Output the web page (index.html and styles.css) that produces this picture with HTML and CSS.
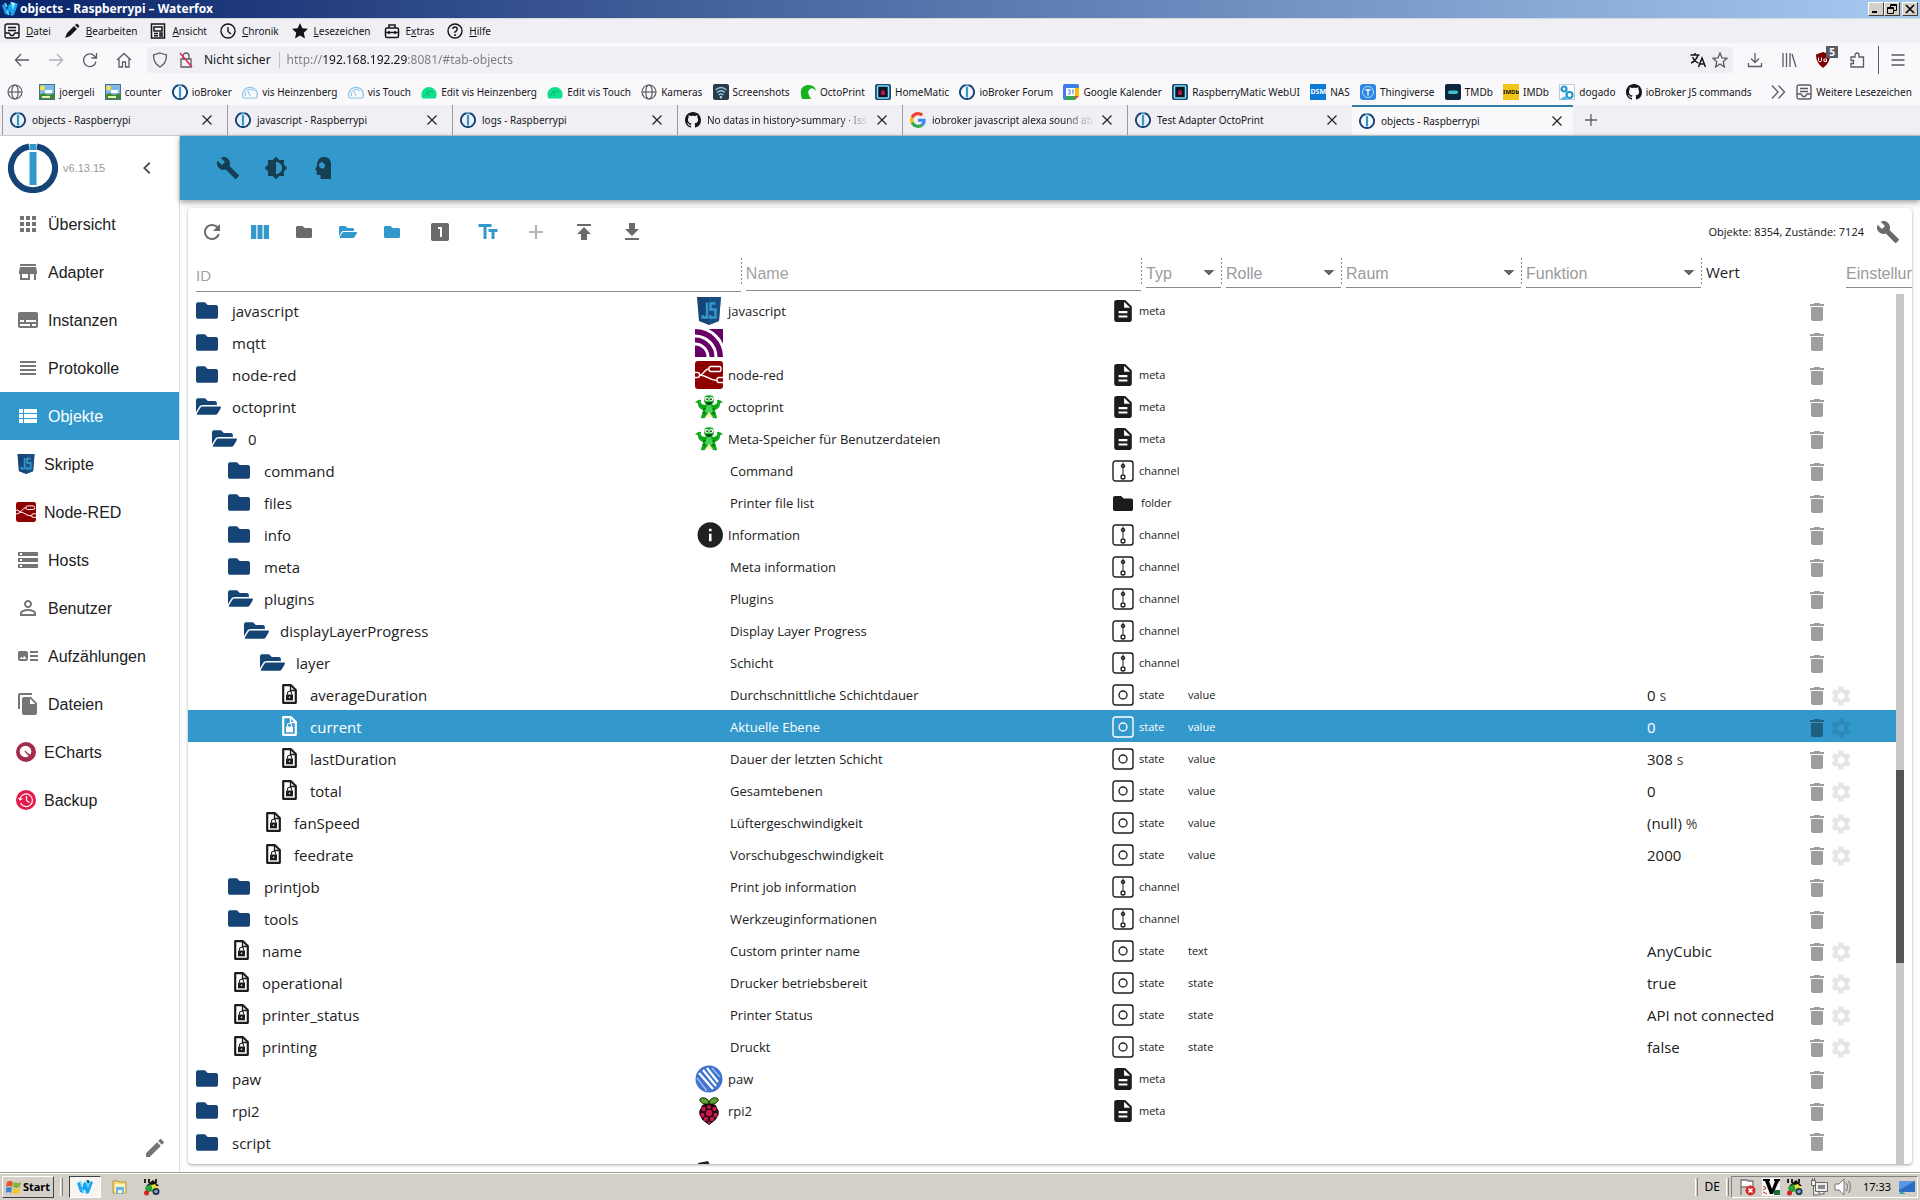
FILE: index.html
```html
<!DOCTYPE html>
<html lang="de">
<head>
<meta charset="utf-8">
<title>objects - Raspberrypi</title>
<link rel="stylesheet" href="styles.css">
</head>
<body>
<svg class="sprite" aria-hidden="true">
  <symbol id="folder" viewBox="0 64 512 384"><path d="M464 128H272l-64-64H48C21.49 64 0 85.49 0 112v288c0 26.51 21.49 48 48 48h416c26.51 0 48-21.49 48-48V176c0-26.51-21.49-48-48-48z"/></symbol>
  <symbol id="open" viewBox="0 64 576 384"><path d="M572.694 292.093L500.27 416.248A63.997 63.997 0 0 1 444.989 448H45.025c-18.523 0-30.064-20.093-20.731-36.093l72.424-124.155A64 64 0 0 1 152 256h399.964c18.523 0 30.064 20.093 20.73 36.093zM152 224h328v-48c0-26.51-21.49-48-48-48H272l-64-64H48C21.49 64 0 85.49 0 112v278.046l69.077-118.418C86.214 242.25 117.989 224 152 224z"/></symbol>
  <symbol id="state" viewBox="0 0 15 20"><path d="M1.2 1.2H9l4.8 4.8v12.8H1.2z" fill="none" stroke="currentColor" stroke-width="2.2" stroke-linejoin="round"/><path d="M8.5 1v5.500H14" fill="none" stroke="currentColor" stroke-width="1.400"/><path d="M4 10.500h7v5.800H4z"/><path d="M5.500 10.500V9.200a2 2 0 0 1 4 0v1.300" fill="none" stroke="currentColor" stroke-width="1.100"/><circle cx="7.500" cy="13.200" r=".8" fill="#fff"/></symbol>
  <symbol id="doc" viewBox="4 2 16 20"><path d="M14 2H6c-1.100 0-2 .9-2 2v16c0 1.100.9 2 2 2h12c1.100 0 2-.9 2-2V8l-6-6zm2 16H8v-2h8v2zm0-4H8v-2h8v2zm-3-5V3.500L18.500 9H13z"/></symbol>
  <symbol id="channel" viewBox="0 0 22 22"><g fill="none" stroke="currentColor"><rect x="1" y="1" width="20" height="20" rx="2.500" stroke-width="1.400"/><path d="M11 2.500v12"/><circle cx="11" cy="6" r="1.800" fill="currentColor" fill-opacity=".55"/><circle cx="11" cy="17" r="2" stroke-width="1.300"/></g></symbol>
  <symbol id="st" viewBox="0 0 22 22"><g fill="none" stroke="currentColor"><rect x="1" y="1" width="20" height="20" rx="2.500" stroke-width="1.400"/><circle cx="11" cy="11" r="4" stroke-width="1.300"/></g></symbol>
  <symbol id="trash" viewBox="0 0 24 24"><path d="M6 19c0 1.100.9 2 2 2h8c1.100 0 2-.9 2-2V7H6v12zM19 4h-3.500l-1-1h-5l-1 1H5v2h14V4z"/></symbol>
  <symbol id="gear" viewBox="0 0 24 24"><path d="M19.140 12.940c.04-.3.060-.61.060-.94 0-.32-.02-.64-.07-.94l2.030-1.580c.18-.14.23-.41.120-.61l-1.920-3.320c-.12-.22-.37-.29-.59-.22l-2.390.96c-.5-.38-1.030-.7-1.620-.94l-.36-2.540c-.04-.24-.24-.41-.48-.41h-3.840c-.24 0-.43.170-.47.410l-.36 2.540c-.59.240-1.130.570-1.620.940l-2.390-.96c-.22-.08-.47 0-.59.220L2.740 8.870c-.12.210-.08.470.120.610l2.030 1.580c-.05.3-.09.630-.09.940s.02.640.07.940l-2.030 1.580c-.18.140-.23.410-.12.610l1.920 3.320c.12.220.37.290.59.220l2.390-.96c.5.380 1.030.7 1.620.940l.36 2.540c.05.240.24.410.48.410h3.840c.24 0 .44-.17.470-.41l.36-2.540c.59-.24 1.130-.56 1.620-.94l2.390.96c.22.080.47 0 .59-.22l1.920-3.320c.12-.22.070-.47-.12-.61l-2.010-1.580zM12 15.600c-1.980 0-3.600-1.620-3.600-3.600s1.620-3.600 3.600-3.600 3.600 1.620 3.600 3.600-1.620 3.600-3.600 3.600z"/></symbol>
  <symbol id="wrench" viewBox="0 0 24 24"><path d="M22.700 19l-9.100-9.100c.9-2.300.4-5-1.500-6.900-2-2-5-2.400-7.400-1.300L9 6 6 9 1.600 4.700C.4 7.100.9 10.100 2.900 12.100c1.900 1.900 4.600 2.400 6.900 1.500l9.100 9.100c.4.4 1 .4 1.400 0l2.300-2.300c.5-.4.5-1.100.1-1.400z"/></symbol>
  <symbol id="iob" viewBox="0 0 50 50"><path d="M21 3.500a22 22 0 1 0 8 0" fill="none" stroke="#164477" stroke-width="6"/><path d="M21.500 1h7v6h-7zM21.500 9h7v33h-7z" fill="#3399cc"/></symbol>
  <symbol id="js" viewBox="0 0 24 28"><path d="M0 0h24l-2 24-10 4-10-4z" fill="#164477"/><path d="M12 0h12l-2 24-10 4z" fill="#1f5587" opacity=".6"/><path d="M5.500 18v2.500H10V5.500M18.500 6.500h-5v6h5v8h-5.500V18" fill="none" stroke="#3399cc" stroke-width="2.400"/></symbol>
  <symbol id="mqtt" viewBox="0 0 28 28"><path d="M0 0h28v28H0z" fill="#660066"/><g fill="none" stroke="#fff" stroke-width="3"><circle cx="0" cy="28" r="13"/><circle cx="0" cy="28" r="21"/><circle cx="0" cy="28" r="29.500"/></g></symbol>
  <symbol id="nred" viewBox="0 0 28 28"><rect width="28" height="28" rx="3" fill="#8f0000"/><g fill="none" stroke="#fff" stroke-width="1.400"><rect x="14" y="5.500" width="12" height="5" rx="2"/><path d="M0 11.500h2.500a2 2 0 0 1 2 2v1a2 2 0 0 1-2 2H0M28 16.500h-4a2 2 0 0 0-2 2v1a2 2 0 0 0 2 2h4M4.500 14c5 0 4-6 9.500-6M4.500 14c8 0 9 5.500 17.500 5.500"/></g></symbol>
  <symbol id="octo" viewBox="0 0 28 24"><path d="M10 1q4-1.500 8 0l1 4q0 3-2 4 1 2 4 0 2-1 1-4 3-1 6 3-3-1-3 1 0 4-5 6l1 4q1 3 1 4-3 1-5-1h-6q-2 2-5 1 0-1 1-4l1-4q-5-2-5-6 0-2-3-1 3-4 6-3-1 3 1 4 3 2 4 0-2-1-2-4z" fill="#0fa81b"/><path d="M11 2h6l-1 6h-4zM12 10h4l2 8h-8z" fill="#45d455"/><circle cx="11.500" cy="4" r="2" fill="#fff"/><circle cx="16.500" cy="4" r="2" fill="#fff"/><circle cx="12" cy="4.200" r=".9"/><circle cx="16" cy="4.200" r=".9"/><path d="M11 7.500h6L14 10zM8 15l2-2M20 15l-2-2M8 18h3M17 18h3" stroke="#044b08"/><path d="M14 17l4 5h-8z" fill="#f4efa8"/></symbol>
  <symbol id="paw" viewBox="0 0 28 28"><circle cx="14" cy="14" r="13.500" fill="#3f73cf"/><path d="M4 8l14 16M8 5l13 16M12 3l11 14" stroke="#fff" stroke-width="2.200"/><path d="M2 13l10 13M17 3l8 9" stroke="#9ab9ee" stroke-width="1.500"/></symbol>
  <symbol id="rpi" viewBox="0 0 22 28"><path d="M11 7Q5 8 2 4 1 0 7 1q4 1 4 6 0-5 4-6 6-1 5 3-3 4-9 3z" fill="#5ea52c" stroke="#1a2a0c"/><path d="M11 7q7-1 8 4 3 3 1 8-2 4-5 6l-4 3-4-3q-3-2-5-6-2-5 1-8 1-5 8-4z" fill="#200610"/><g fill="#c51a4a"><circle cx="11" cy="16" r="3.200"/><circle cx="5.500" cy="12" r="2.200"/><circle cx="16.500" cy="12" r="2.200"/><circle cx="11" cy="10" r="2"/><circle cx="4.500" cy="18" r="2.200"/><circle cx="17.500" cy="18" r="2.200"/><circle cx="8" cy="22" r="2.200"/><circle cx="14" cy="22" r="2.200"/><circle cx="11" cy="25.500" r="1.300"/></g></symbol>
  <symbol id="globe" viewBox="0 0 16 16"><g fill="none" stroke="#5b5b66" stroke-width="1.200"><circle cx="8" cy="8" r="7"/><ellipse cx="8" cy="8" rx="3.200" ry="7"/><path d="M1 8h14"/></g></symbol>
  <symbol id="pic" viewBox="0 0 16 16"><path d="M0 0h16v16H0z" fill="#7db7ec"/><circle cx="3.500" cy="4" r="2.500" fill="#f6e34a"/><path d="M6 6h7v3H6z" fill="#fff"/><path d="M0 11l4-2 5 2 7-2v7H0z" fill="#3d8b2c"/><path d="M3 12h8v2H3z" fill="#e9f3c2"/><path d="M.5.5h15v15H.5z" fill="none" stroke="#4b6f86"/></symbol>
  <symbol id="gauge" viewBox="0 0 16 16"><path d="M1.500 14A7.300 7.300 0 1 1 14.500 14z" fill="#f4fbff" stroke="#8fc2e6" stroke-width="1.200"/><path d="M3.500 12A5 5 0 0 1 12 7M8 12L6 7" fill="none" stroke="#8fc2e6"/></symbol>
  <symbol id="ggauge" viewBox="0 0 16 16"><path d="M1.500 14.500A7.600 7.600 0 1 1 14.500 14.500z" fill="#0fe08c"/><path d="M4 12A5 5 0 0 1 12 8M8 12L6 7" fill="none" stroke="#0bb573"/></symbol>
  <symbol id="wifi" viewBox="0 0 16 16"><rect width="16" height="16" rx="2" fill="#2b3a45"/><path d="M2.500 6q5.500-5 11 0M4 8.500q4-3.500 8 0M5.500 11q2.500-2 5 0" fill="none" stroke="#8fc7ee" stroke-width="1.300"/><circle cx="8" cy="13.200" r="1.200" fill="#b6dcf5"/></symbol>
  <symbol id="tent" viewBox="0 0 16 16"><path d="M2 15Q-2 3 7 1q8-1 9 6-3-4-6-2t-1 6l2 4z" fill="#16b31c"/></symbol>
  <symbol id="hm" viewBox="0 0 16 16"><rect width="16" height="16" rx="2" fill="#1c4a74"/><rect x="2.500" y="2" width="11" height="12" rx="1" fill="#0a1622" stroke="#7fe0fa" stroke-width="1.500"/><path d="M6 11V7.500L8 5.500l2 2V11z" fill="#b8173d"/></symbol>
  <symbol id="cal" viewBox="0 0 16 16"><path d="M0 2q0-2 2-2h12q2 0 2 2v3H0z" fill="#3f7de8"/><path d="M0 4h4v12H2q-2 0-2-2z" fill="#3f7de8"/><path d="M12 4h4v8h-4z" fill="#fbbc04"/><path d="M3 12h9v4H3z" fill="#34a853"/><path d="M12 12h4l-4 4z" fill="#ea4335"/><path d="M3 4h9v8H3z" fill="#fff"/><path d="M5 6h2v4H5M9 6h1v4" fill="none" stroke="#3f7de8"/></symbol>
  <symbol id="github" viewBox="0 0 16 16"><path d="M8 0C3.580 0 0 3.580 0 8c0 3.540 2.290 6.530 5.470 7.590.4.070.55-.17.550-.38 0-.19-.01-.82-.01-1.490-2.010.370-2.530-.49-2.690-.94-.09-.23-.48-.94-.82-1.130-.28-.15-.68-.52-.01-.53.630-.01 1.080.580 1.230.820.720 1.210 1.870.870 2.330.660.070-.52.280-.87.510-1.070-1.780-.2-3.640-.89-3.640-3.950 0-.87.310-1.590.820-2.150-.08-.2-.36-1.020.080-2.120 0 0 .67-.21 2.200.820.640-.18 1.320-.27 2-.27s1.360.090 2 .27c1.530-1.040 2.200-.82 2.200-.82.440 1.100.160 1.920.080 2.120.510.560.820 1.270.820 2.150 0 3.070-1.870 3.750-3.650 3.950.290.250.540.730.540 1.480 0 1.070-.01 1.930-.01 2.200 0 .21.150.460.550.380A8.013 8.013 0 0 0 16 8c0-4.420-3.580-8-8-8z"/></symbol>
  <symbol id="close" viewBox="0 0 12 12"><path d="M1.500 1.500l9 9M10.500 1.500l-9 9" stroke="#222" stroke-width="1.200"/></symbol>
  <symbol id="tray" viewBox="0 0 16 16"><g fill="none" stroke="currentColor" stroke-width="1.400"><rect x="1" y="1" width="14" height="14" rx="2"/><path d="M4 4.500h8M4 7.500h8M1 10h4l2 2.500h2L11 10h4"/></g></symbol>
  <symbol id="wf" viewBox="0 0 16 16"><path d="M0 4l3-1 2 6 2-6 3 1 1 4 2-6 3 1-4 11-3 1-1-5-2 4-3-1z" fill="#1aa3f0"/><path d="M3 2l2 4M9 1l2 6 2-5M5 10l2 4" stroke="#61e2ff" stroke-width="1.500"/></symbol>
  <symbol id="house" viewBox="0 0 18 18"><path d="M1 1h2v4H1zM5 1h2v4H5zM12 1h2v4h-2z" fill="#222"/><path d="M3 8l7-6 6 6z" fill="#111"/><path d="M5 8l7-2 4 5-8 4z" fill="#e8df31"/><path d="M2 9l6-3 2 7-7 2z" fill="#25a03a"/><circle cx="13" cy="13.500" r="3.500" fill="#1d2f55"/><circle cx="13" cy="13.500" r="1.800" fill="#7fa7d6"/><circle cx="3.500" cy="15" r="2.500" fill="#d82323"/></symbol>
</svg>

<header class="titlebar">
  <svg class="i16"><use href="#wf"/></svg><h1>objects - Raspberrypi – Waterfox</h1>
  <div class="winbtns">
    <button aria-label="Minimieren"><svg viewBox="0 0 10 10"><path d="M1 8h5" stroke="#000" stroke-width="2"/></svg></button><button aria-label="Wiederherstellen"><svg viewBox="0 0 10 10"><path d="M3.500 3V.5h6v6H7M3 1.500h6M.5 3.500h6v6h-6zM.5 4.500h6" fill="none" stroke="#000"/></svg></button><button class="x" aria-label="Schließen"><svg viewBox="0 0 10 10"><path d="M1 1l8 8M9 1l-8 8" stroke="#000" stroke-width="1.600"/></svg></button>
  </div>
</header>

<nav class="menubar">
  <button><svg class="i16"><use href="#tray"/></svg><span><u>D</u>atei</span></button>
  <button><svg class="i16" viewBox="0 0 16 16"><path d="M1 15l2-5 7-7 3 3-7 7zM11 2l2-1.500L15.500 3 14 5z"/></svg><span><u>B</u>earbeiten</span></button>
  <button><svg class="i16" viewBox="0 0 16 16"><g fill="none" stroke="currentColor" stroke-width="1.500"><path d="M1.500 1h13v14h-13zM4 4h8v4H4z"/><path d="M4 10.500h4M4 12.800h4M10 10h2v3h-2z"/></g></svg><span><u>A</u>nsicht</span></button>
  <button><svg class="i16" viewBox="0 0 16 16"><g fill="none" stroke="currentColor" stroke-width="1.400"><circle cx="8" cy="8" r="7"/><path d="M8 4v4.500L11 11"/></g></svg><span><u>C</u>hronik</span></button>
  <button><svg class="i16" viewBox="0 0 16 16"><path d="M8 0l2.300 5.200 5.700.6-4.200 3.900L13 15.500 8 12.500l-5 3 1.200-5.800L0 5.800l5.700-.6z"/></svg><span><u>L</u>esezeichen</span></button>
  <button><svg class="i16" viewBox="0 0 16 16"><g fill="none" stroke="currentColor" stroke-width="1.500"><rect x="1.500" y="5" width="13" height="9.500" rx="1.500"/><path d="M5 5V2h6v3M1.500 9.500h13M5 8v3M11 8v3"/></g></svg><span>E<u>x</u>tras</span></button>
  <button><svg class="i16" viewBox="0 0 16 16"><g fill="none" stroke="currentColor" stroke-width="1.400"><circle cx="8" cy="8" r="7"/><path d="M5.800 6q0-2 2.200-2t2.200 2T8 9v1"/></g><circle cx="8" cy="12" r="1"/></svg><span><u>H</u>ilfe</span></button>
</nav>

<div class="navbar">
  <button aria-label="Zurück"><svg class="i16 ln" viewBox="0 0 16 16"><path d="M15 8H1.500M7 2L1.500 8 7 14"/></svg></button>
  <button class="off" aria-label="Vor"><svg class="i16 ln" viewBox="0 0 16 16"><path d="M1 8h13.500M9 2l5.500 6L9 14"/></svg></button>
  <button aria-label="Neu laden"><svg class="i16 ln" viewBox="0 0 16 16"><path d="M14 9.500A6.300 6.300 0 1 1 12.500 4L14 5.500M14.500 1v5h-5"/></svg></button>
  <button aria-label="Startseite"><svg class="i16 ln" viewBox="0 0 16 16"><path d="M1 8l7-6.500L15 8M3 7v8h3.500v-5h3v5H13V7"/></svg></button>
  <div class="urlbar">
    <svg class="i16 ln" viewBox="0 0 16 16"><path d="M8 1l6.500 2q0 8.500-6.500 12Q1.500 11.500 1.500 3z"/></svg>
    <svg class="i16 ln" viewBox="0 0 16 16"><path d="M3 7h10v8H3zM5 7V4a3 3 0 0 1 6 0v3"/><path d="M2 1l12 14" stroke="#e22850" stroke-width="1.600"/></svg>
    <span class="sec">Nicht sicher</span>
    <input class="url" aria-label="Adresse" value="http://192.168.192.29:8081/#tab-objects">
    <svg class="i16" viewBox="0 0 16 16"><g fill="none" stroke="#15141a" stroke-width="1.500"><path d="M.5 3h9M5 1v2M8 3q-2 6-7 8M2.500 5Q5 10 8.500 11M8.500 15L12 6l3.500 9M9.700 12h4.600"/></g></svg>
    <svg class="i16 ln" viewBox="0 0 16 16"><path d="M8 1l2 4.800 5 .5-3.800 3.400L12.400 15 8 12l-4.400 3 1.200-5.300L1 6.300l5-.5z"/></svg>
  </div>
  <div class="navright">
    <button aria-label="Downloads"><svg class="i16 ln" viewBox="0 0 16 16"><path d="M8 1v9M4 6.500l4 4 4-4M1.500 11v3.500h13V11"/></svg></button>
    <button aria-label="Bibliothek"><svg class="i16 ln" viewBox="0 0 16 16"><path d="M2 1v14M5.500 1v14M9 1v14M11 2l4 13"/></svg></button>
    <button aria-label="uBlock"><svg class="i16" viewBox="0 0 16 16"><path d="M8 0l7 2.500q0 9-7 13.500Q1 11.500 1 2.500z" fill="#800000"/><path d="M3.500 5.500v3q0 1.200 1.500 1.200t1.500-1.200v-3M9.500 7h2v2.500h-2.500V7" fill="none" stroke="#fff"/></svg><span class="badge">5</span></button>
    <button aria-label="Erweiterungen"><svg class="i16 ln" viewBox="0 0 16 16"><path d="M2 15v-3.500h2.500v-3H2V5h4V3a2 2 0 0 1 4 0v2h4.500v10z"/></svg></button>
    <i class="rule"></i>
    <button aria-label="Menü"><svg class="i16 ln" viewBox="0 0 16 16"><path d="M1.500 3h13M1.500 8h13M1.500 13h13"/></svg></button>
  </div>
</div>

<nav class="bookmarks">
  <a href="#"><svg class="i16"><use href="#globe"/></svg></a>
  <a href="#" class="first"><svg class="i16"><use href="#pic"/></svg>joergeli</a>
  <a href="#"><svg class="i16"><use href="#pic"/></svg>counter</a>
  <a href="#"><svg class="i16"><use href="#iob"/></svg>ioBroker</a>
  <a href="#"><svg class="i16"><use href="#gauge"/></svg>vis Heinzenberg</a>
  <a href="#"><svg class="i16"><use href="#gauge"/></svg>vis Touch</a>
  <a href="#"><svg class="i16"><use href="#ggauge"/></svg>Edit vis Heinzenberg</a>
  <a href="#"><svg class="i16"><use href="#ggauge"/></svg>Edit vis Touch</a>
  <a href="#"><svg class="i16"><use href="#globe"/></svg>Kameras</a>
  <a href="#"><svg class="i16"><use href="#wifi"/></svg>Screenshots</a>
  <a href="#"><svg class="i16"><use href="#tent"/></svg>OctoPrint</a>
  <a href="#"><svg class="i16"><use href="#hm"/></svg>HomeMatic</a>
  <a href="#"><svg class="i16"><use href="#iob"/></svg>ioBroker Forum</a>
  <a href="#"><svg class="i16"><use href="#cal"/></svg>Google Kalender</a>
  <a href="#"><svg class="i16"><use href="#hm"/></svg>RaspberryMatic WebUI</a>
  <a href="#"><b class="fav dsm">DSM</b>NAS</a>
  <a href="#"><svg class="i16" viewBox="0 0 16 16"><rect width="16" height="16" rx="3" fill="#2b87e3"/><circle cx="8" cy="8" r="5.500" fill="none" stroke="#bfe0ff"/><path d="M5.500 6h5M8 6v5.500" stroke="#fff" stroke-width="1.300"/></svg>Thingiverse</a>
  <a href="#"><svg class="i16" viewBox="0 0 16 16"><rect width="16" height="16" rx="2" fill="#0d253f"/><rect x="3" y="6.500" width="10" height="3.500" rx="1.700" fill="#3cbecb"/></svg>TMDb</a>
  <a href="#"><b class="fav imdb">IMDb</b>IMDb</a>
  <a href="#"><svg class="i16" viewBox="0 0 16 16"><path d="M.5.5h15v15H.5z" fill="#fff" stroke="#b9cdd8"/><g fill="none" stroke="#2197cf" stroke-width="2.200"><circle cx="5" cy="5" r="2.500"/><circle cx="10.500" cy="11" r="3"/></g><path d="M1 16q3-5 7-3v3z" fill="#58b9e6"/></svg>dogado</a>
  <a href="#"><svg class="i16"><use href="#github"/></svg>ioBroker JS commands</a>
  <button class="more" aria-label="Mehr"><svg class="i16 ln" viewBox="0 0 16 16"><path d="M2 1.500L8 8l-6 6.500M8.500 1.500l6 6.500-6 6.500"/></svg></button>
  <a href="#"><svg class="i16 grey"><use href="#tray"/></svg>Weitere Lesezeichen</a>
</nav>

<div class="tabs">
  <div class="tab"><svg class="i16"><use href="#iob"/></svg><span>objects - Raspberrypi</span><button aria-label="Tab schließen"><svg><use href="#close"/></svg></button></div>
  <div class="tab"><svg class="i16"><use href="#iob"/></svg><span>javascript - Raspberrypi</span><button aria-label="Tab schließen"><svg><use href="#close"/></svg></button></div>
  <div class="tab"><svg class="i16"><use href="#iob"/></svg><span>logs - Raspberrypi</span><button aria-label="Tab schließen"><svg><use href="#close"/></svg></button></div>
  <div class="tab"><svg class="i16"><use href="#github"/></svg><span class="fade">No datas in history&gt;summary · Iss</span><button aria-label="Tab schließen"><svg><use href="#close"/></svg></button></div>
  <div class="tab"><svg class="i16" viewBox="0 0 48 48"><path fill="#EA4335" d="M24 9.500c3.540 0 6.710 1.220 9.210 3.600l6.850-6.850C35.900 2.380 30.470 0 24 0 14.620 0 6.510 5.380 2.560 13.220l7.980 6.190C12.430 13.720 17.740 9.500 24 9.500z"/><path fill="#4285F4" d="M46.980 24.550c0-1.570-.15-3.090-.38-4.550H24v9.020h12.940c-.58 2.960-2.260 5.480-4.780 7.180l7.730 6c4.510-4.180 7.090-10.360 7.090-17.650z"/><path fill="#FBBC05" d="M10.530 28.590c-.48-1.450-.76-2.990-.76-4.590s.27-3.140.76-4.590l-7.980-6.190C.92 16.460 0 20.120 0 24c0 3.880.92 7.540 2.560 10.780l7.970-6.190z"/><path fill="#34A853" d="M24 48c6.480 0 11.930-2.130 15.890-5.810l-7.730-6c-2.150 1.450-4.920 2.300-8.160 2.300-6.260 0-11.570-4.220-13.470-9.910l-7.980 6.190C6.510 42.620 14.620 48 24 48z"/></svg><span class="fade">iobroker javascript alexa sound ab</span><button aria-label="Tab schließen"><svg><use href="#close"/></svg></button></div>
  <div class="tab"><svg class="i16"><use href="#iob"/></svg><span>Test Adapter OctoPrint</span><button aria-label="Tab schließen"><svg><use href="#close"/></svg></button></div>
  <div class="tab active"><svg class="i16"><use href="#iob"/></svg><span>objects - Raspberrypi</span><button aria-label="Tab schließen"><svg><use href="#close"/></svg></button></div>
  <button class="newtab" aria-label="Neuer Tab"><svg class="i16 ln" viewBox="0 0 16 16"><path d="M8 2v12M2 8h12"/></svg></button>
</div>

<div class="app">
  <aside class="side">
    <div class="brand"><svg class="logo"><use href="#iob"/></svg><span>v6.13.15</span><button aria-label="Einklappen"><svg class="i24" viewBox="0 0 24 24"><path d="M15.400 7.400L14 6l-6 6 6 6 1.400-1.400L10.800 12z"/></svg></button></div>
    <a href="#"><svg class="i24" viewBox="0 0 24 24"><path d="M4 8h4V4H4v4zm6 12h4v-4h-4v4zm-6 0h4v-4H4v4zm0-6h4v-4H4v4zm6 0h4v-4h-4v4zm6-10v4h4V4h-4zm-6 4h4V4h-4v4zm6 6h4v-4h-4v4zm0 6h4v-4h-4v4z"/></svg><span>Übersicht</span></a>
    <a href="#"><svg class="i24" viewBox="0 0 24 24"><path d="M20 4H4v2h16V4zm1 10v-2l-1-5H4l-1 5v2h1v6h10v-6h4v6h2v-6h1zm-9 4H6v-4h6v4z"/></svg><span>Adapter</span></a>
    <a href="#"><svg class="i24" viewBox="0 0 24 24"><path d="M20 4H4c-1.100 0-2 .9-2 2v12c0 1.100.9 2 2 2h16c1.100 0 2-.9 2-2V6c0-1.100-.9-2-2-2zM4 12h4v2H4v-2zm10 6H4v-2h10v2zm6 0h-4v-2h4v2zm0-4H10v-2h10v2z"/></svg><span>Instanzen</span></a>
    <a href="#"><svg class="i24" viewBox="0 0 24 24"><path d="M4 15h16v-2H4v2zm0 4h16v-2H4v2zm0-8h16V9H4v2zm0-6v2h16V5H4z"/></svg><span>Protokolle</span></a>
    <a href="#" class="on"><svg class="i24" viewBox="0 0 24 24"><path d="M3 14h4v-4H3v4zm0 5h4v-4H3v4zM3 9h4V5H3v4zm5 5h13v-4H8v4zm0 5h13v-4H8v4zM8 5v4h13V5H8z"/></svg><span>Objekte</span></a>
    <a href="#" class="ext"><svg class="i20"><use href="#js"/></svg><span>Skripte</span></a>
    <a href="#" class="ext"><svg class="i20"><use href="#nred"/></svg><span>Node-RED</span></a>
    <a href="#"><svg class="i24" viewBox="0 0 24 24"><path d="M2 20h20v-4H2v4zm2-3h2v2H4v-2zM2 4v4h20V4H2zm4 3H4V5h2v2zm-4 7h20v-4H2v4zm2-3h2v2H4v-2z"/></svg><span>Hosts</span></a>
    <a href="#"><svg class="i24" viewBox="0 0 24 24"><path d="M12 5.900c1.160 0 2.100.94 2.100 2.100s-.94 2.100-2.100 2.100S9.900 9.160 9.900 8s.94-2.100 2.100-2.100m0 9c2.970 0 6.100 1.460 6.100 2.100v1.100H5.900V17c0-.64 3.130-2.100 6.100-2.100M12 4C9.790 4 8 5.790 8 8s1.790 4 4 4 4-1.790 4-4-1.790-4-4-4zm0 9c-2.670 0-8 1.340-8 4v3h16v-3c0-2.660-5.330-4-8-4z"/></svg><span>Benutzer</span></a>
    <a href="#"><svg class="i24" viewBox="0 0 24 24"><path d="M22 13h-8v-2h8v2zm0-6h-8v2h8V7zm-8 10h8v-2h-8v2zm-2-8v6c0 1.100-.9 2-2 2H4c-1.100 0-2-.9-2-2V9c0-1.100.9-2 2-2h6c1.100 0 2 .9 2 2zm-1.500 6l-2.250-3-1.750 2.260-1.250-1.510L3.500 15h7z"/></svg><span>Aufzählungen</span></a>
    <a href="#"><svg class="i24" viewBox="0 0 24 24"><path d="M16 1H4c-1.100 0-2 .9-2 2v14h2V3h12V1zm-1 4l6 6v10c0 1.100-.9 2-2 2H8c-1.100 0-2-.9-2-2V7c0-1.100.9-2 2-2h7zm-1 7h5.500L14 6.500V12z"/></svg><span>Dateien</span></a>
    <a href="#" class="ext"><svg class="i20" viewBox="0 0 20 20"><circle cx="10" cy="10" r="10" fill="#a32b4c"/><circle cx="9.500" cy="9.500" r="5.800" fill="#fff"/><path d="M9 9l4.500 5M12 12l4 2" stroke="#a32b4c" stroke-width="1.300"/></svg><span>ECharts</span></a>
    <a href="#" class="ext"><svg class="i20" viewBox="0 0 20 20"><circle cx="10" cy="10" r="10" fill="#e6194b"/><path d="M4.500 13a6.300 6.300 0 1 0-.5-4M2.500 8L4 10l2.500-1.500M10.500 6v4.500l3 2" fill="none" stroke="#fff" stroke-width="1.200"/></svg><span>Backup</span></a>
    <button class="edit" aria-label="Bearbeiten"><svg class="i24" viewBox="0 0 24 24"><path d="M3 17.250V21h3.750L17.810 9.940l-3.750-3.750L3 17.250zM20.710 7.040c.39-.39.39-1.020 0-1.410l-2.340-2.340c-.39-.39-1.020-.39-1.410 0l-1.830 1.830 3.750 3.750 1.830-1.830z"/></svg></button>
  </aside>
  <main class="main">
    <div class="appbar">
      <button aria-label="Einstellungen"><svg class="i24"><use href="#wrench"/></svg></button>
      <button aria-label="Farbschema"><svg class="i24" viewBox="0 0 24 24"><path d="M20 15.310L23.310 12 20 8.690V4h-4.690L12 .69 8.690 4H4v4.690L.69 12 4 15.310V20h4.690L12 23.310 15.310 20H20v-4.690zM12 18V6c3.310 0 6 2.690 6 6s-2.690 6-6 6z"/></svg></button>
      <button aria-label="Expertenmodus"><svg class="i24" viewBox="0 0 24 24"><path fill-rule="evenodd" d="M12 1c4.500 0 7 2.500 7 7v15H8.500v-4H6q-1.500 0-1.500-1.500V14H3l2-4.500Q5 1 12 1zM9.500 6L8.200 7 7 7.500l.3 1.500-.6 1.300 1.300.7.500 1.200h1.300l1.200.6 1-1 1-.7-.1-1.300.4-1.200-1.300-.6-.6-1.200z"/></svg></button>
    </div>
    <section class="panel">
      <div class="tools">
        <button aria-label="Aktualisieren"><svg class="i24" viewBox="0 0 24 24"><path d="M17.650 6.350C16.200 4.900 14.210 4 12 4c-4.420 0-8 3.580-8 8s3.580 8 8 8c3.730 0 6.840-2.550 7.730-6h-2.080c-.82 2.330-3.040 4-5.650 4-3.310 0-6-2.690-6-6s2.690-6 6-6c1.660 0 3.140.69 4.220 1.780L13 11h7V4l-2.350 2.350z"/></svg></button>
        <button class="blue" aria-label="Spalten"><svg class="i24" viewBox="0 0 24 24"><path d="M9.500 19h5V5h-5v14zM3 19h5.300V5H3v14zM15.700 5v14H21V5h-5.300z"/></svg></button>
        <div class="folders">
          <button aria-label="Alle zuklappen"><svg class="f16"><use href="#folder"/></svg></button>
          <button class="blue" aria-label="Alle aufklappen"><svg class="f18"><use href="#open"/></svg></button>
          <button class="blue" aria-label="Ebene zuklappen"><svg class="f16"><use href="#folder"/></svg></button>
        </div>
        <button aria-label="Zustände"><svg class="i24" viewBox="0 0 24 24"><path d="M19 3H5c-1.100 0-2 .9-2 2v14c0 1.100.9 2 2 2h14c1.100 0 2-.9 2-2V5c0-1.100-.9-2-2-2zm-5 14h-2V9h-2V7h4v10z"/></svg></button>
        <button class="blue" aria-label="Beschreibung"><svg class="i24" viewBox="0 0 24 24"><path d="M2.500 4v3h5v12h3V7h5V4h-13zm19 5h-9v3h3v7h3v-7h3V9z"/></svg></button>
        <button class="off" aria-label="Hinzufügen"><svg class="i24" viewBox="0 0 24 24"><path d="M19 13h-6v6h-2v-6H5v-2h6V5h2v6h6v2z"/></svg></button>
        <button aria-label="Hochladen"><svg class="i24" viewBox="0 0 24 24"><path d="M5 4v2h14V4H5zm0 10h4v6h6v-6h4l-7-7-7 7z"/></svg></button>
        <button aria-label="Herunterladen"><svg class="i24" viewBox="0 0 24 24"><path d="M19 9h-4V3H9v6H5l7 7 7-7zM5 18v2h14v-2H5z"/></svg></button>
        <span class="stats">Objekte: 8354, Zustände: 7124</span>
        <button aria-label="Konfigurieren"><svg class="i24"><use href="#wrench"/></svg></button>
      </div>
      <div class="filters">
        <div class="f id"><input placeholder="ID" aria-label="ID"></div>
        <div class="f name"><input placeholder="Name" aria-label="Name"></div>
        <div class="f typ"><select aria-label="Typ"><option>Typ</option></select></div>
        <div class="f rolle"><select aria-label="Rolle"><option>Rolle</option></select></div>
        <div class="f raum"><select aria-label="Raum"><option>Raum</option></select></div>
        <div class="f raum"><select aria-label="Funktion"><option>Funktion</option></select></div>
        <div class="f wert">Wert</div>
        <div class="f einst"><select aria-label="Einstellungen"><option>Einstellungen</option></select></div>
      </div>
      <div class="scroll">
        <div class="view">
        <table class="objects">
          <colgroup><col><col class="cname"><col class="ctype"><col class="crole"><col class="cval"><col class="cact"></colgroup>
          <tbody>
          <tr><td><div class="id l0"><svg class="fc"><use href="#folder"/></svg>javascript</div></td><td><div class="nm"><svg><use href="#js"/></svg>javascript</div></td><td><div class="ty"><svg><use href="#doc"/></svg>meta</div></td><td></td><td></td><td><div class="ac"><button aria-label="Löschen"><svg><use href="#trash"/></svg></button></div></td></tr>
          <tr><td><div class="id l0"><svg class="fc"><use href="#folder"/></svg>mqtt</div></td><td><div class="nm"><svg><use href="#mqtt"/></svg></div></td><td></td><td></td><td></td><td><div class="ac up"><button aria-label="Löschen"><svg><use href="#trash"/></svg></button></div></td></tr>
          <tr><td><div class="id l0"><svg class="fc"><use href="#folder"/></svg>node-red</div></td><td><div class="nm"><svg><use href="#nred"/></svg>node-red</div></td><td><div class="ty"><svg><use href="#doc"/></svg>meta</div></td><td></td><td></td><td><div class="ac"><button aria-label="Löschen"><svg><use href="#trash"/></svg></button></div></td></tr>
          <tr><td><div class="id l0"><svg class="fo"><use href="#open"/></svg>octoprint</div></td><td><div class="nm"><svg><use href="#octo"/></svg>octoprint</div></td><td><div class="ty"><svg><use href="#doc"/></svg>meta</div></td><td></td><td></td><td><div class="ac"><button aria-label="Löschen"><svg><use href="#trash"/></svg></button></div></td></tr>
          <tr><td><div class="id l1"><svg class="fo"><use href="#open"/></svg>0</div></td><td><div class="nm"><svg><use href="#octo"/></svg>Meta-Speicher für Benutzerdateien</div></td><td><div class="ty"><svg><use href="#doc"/></svg>meta</div></td><td></td><td></td><td><div class="ac"><button aria-label="Löschen"><svg><use href="#trash"/></svg></button></div></td></tr>
          <tr><td><div class="id l2"><svg class="fc"><use href="#folder"/></svg>command</div></td><td><div class="nm no">Command</div></td><td><div class="ty"><svg><use href="#channel"/></svg>channel</div></td><td></td><td></td><td><div class="ac"><button aria-label="Löschen"><svg><use href="#trash"/></svg></button></div></td></tr>
          <tr><td><div class="id l2"><svg class="fc"><use href="#folder"/></svg>files</div></td><td><div class="nm no">Printer file list</div></td><td><div class="ty fold"><svg><use href="#folder"/></svg>folder</div></td><td></td><td></td><td><div class="ac"><button aria-label="Löschen"><svg><use href="#trash"/></svg></button></div></td></tr>
          <tr><td><div class="id l2"><svg class="fc"><use href="#folder"/></svg>info</div></td><td><div class="nm"><svg viewBox="0 1 22 22"><path d="M12 2C6.480 2 2 6.480 2 12s4.480 10 10 10 10-4.480 10-10S17.520 2 12 2zm1 15h-2v-6h2v6zm0-8h-2V7h2v2z"/></svg>Information</div></td><td><div class="ty"><svg><use href="#channel"/></svg>channel</div></td><td></td><td></td><td><div class="ac"><button aria-label="Löschen"><svg><use href="#trash"/></svg></button></div></td></tr>
          <tr><td><div class="id l2"><svg class="fc"><use href="#folder"/></svg>meta</div></td><td><div class="nm no">Meta information</div></td><td><div class="ty"><svg><use href="#channel"/></svg>channel</div></td><td></td><td></td><td><div class="ac"><button aria-label="Löschen"><svg><use href="#trash"/></svg></button></div></td></tr>
          <tr><td><div class="id l2"><svg class="fo"><use href="#open"/></svg>plugins</div></td><td><div class="nm no">Plugins</div></td><td><div class="ty"><svg><use href="#channel"/></svg>channel</div></td><td></td><td></td><td><div class="ac"><button aria-label="Löschen"><svg><use href="#trash"/></svg></button></div></td></tr>
          <tr><td><div class="id l3"><svg class="fo"><use href="#open"/></svg>displayLayerProgress</div></td><td><div class="nm no">Display Layer Progress</div></td><td><div class="ty"><svg><use href="#channel"/></svg>channel</div></td><td></td><td></td><td><div class="ac"><button aria-label="Löschen"><svg><use href="#trash"/></svg></button></div></td></tr>
          <tr><td><div class="id l4"><svg class="fo"><use href="#open"/></svg>layer</div></td><td><div class="nm no">Schicht</div></td><td><div class="ty"><svg><use href="#channel"/></svg>channel</div></td><td></td><td></td><td><div class="ac"><button aria-label="Löschen"><svg><use href="#trash"/></svg></button></div></td></tr>
          <tr><td><div class="id l5"><svg class="sf"><use href="#state"/></svg>averageDuration</div></td><td><div class="nm no">Durchschnittliche Schichtdauer</div></td><td><div class="ty"><svg><use href="#st"/></svg>state</div></td><td class="ro">value</td><td class="va">0 <small>s</small></td><td><div class="ac"><button aria-label="Löschen"><svg><use href="#trash"/></svg></button><button class="g" aria-label="Einstellungen"><svg><use href="#gear"/></svg></button></div></td></tr>
          <tr class="sel"><td><div class="id l5"><svg class="sf"><use href="#state"/></svg>current</div></td><td><div class="nm no">Aktuelle Ebene</div></td><td><div class="ty"><svg><use href="#st"/></svg>state</div></td><td class="ro">value</td><td class="va">0</td><td><div class="ac"><button aria-label="Löschen"><svg><use href="#trash"/></svg></button><button class="g" aria-label="Einstellungen"><svg><use href="#gear"/></svg></button></div></td></tr>
          <tr><td><div class="id l5"><svg class="sf"><use href="#state"/></svg>lastDuration</div></td><td><div class="nm no">Dauer der letzten Schicht</div></td><td><div class="ty"><svg><use href="#st"/></svg>state</div></td><td class="ro">value</td><td class="va">308 <small>s</small></td><td><div class="ac"><button aria-label="Löschen"><svg><use href="#trash"/></svg></button><button class="g" aria-label="Einstellungen"><svg><use href="#gear"/></svg></button></div></td></tr>
          <tr><td><div class="id l5"><svg class="sf"><use href="#state"/></svg>total</div></td><td><div class="nm no">Gesamtebenen</div></td><td><div class="ty"><svg><use href="#st"/></svg>state</div></td><td class="ro">value</td><td class="va">0</td><td><div class="ac"><button aria-label="Löschen"><svg><use href="#trash"/></svg></button><button class="g" aria-label="Einstellungen"><svg><use href="#gear"/></svg></button></div></td></tr>
          <tr><td><div class="id l4"><svg class="sf"><use href="#state"/></svg>fanSpeed</div></td><td><div class="nm no">Lüftergeschwindigkeit</div></td><td><div class="ty"><svg><use href="#st"/></svg>state</div></td><td class="ro">value</td><td class="va">(null) <small>%</small></td><td><div class="ac"><button aria-label="Löschen"><svg><use href="#trash"/></svg></button><button class="g" aria-label="Einstellungen"><svg><use href="#gear"/></svg></button></div></td></tr>
          <tr><td><div class="id l4"><svg class="sf"><use href="#state"/></svg>feedrate</div></td><td><div class="nm no">Vorschubgeschwindigkeit</div></td><td><div class="ty"><svg><use href="#st"/></svg>state</div></td><td class="ro">value</td><td class="va">2000</td><td><div class="ac"><button aria-label="Löschen"><svg><use href="#trash"/></svg></button><button class="g" aria-label="Einstellungen"><svg><use href="#gear"/></svg></button></div></td></tr>
          <tr><td><div class="id l2"><svg class="fc"><use href="#folder"/></svg>printjob</div></td><td><div class="nm no">Print job information</div></td><td><div class="ty"><svg><use href="#channel"/></svg>channel</div></td><td></td><td></td><td><div class="ac"><button aria-label="Löschen"><svg><use href="#trash"/></svg></button></div></td></tr>
          <tr><td><div class="id l2"><svg class="fc"><use href="#folder"/></svg>tools</div></td><td><div class="nm no">Werkzeuginformationen</div></td><td><div class="ty"><svg><use href="#channel"/></svg>channel</div></td><td></td><td></td><td><div class="ac"><button aria-label="Löschen"><svg><use href="#trash"/></svg></button></div></td></tr>
          <tr><td><div class="id l2"><svg class="sf"><use href="#state"/></svg>name</div></td><td><div class="nm no">Custom printer name</div></td><td><div class="ty"><svg><use href="#st"/></svg>state</div></td><td class="ro">text</td><td class="va">AnyCubic</td><td><div class="ac"><button aria-label="Löschen"><svg><use href="#trash"/></svg></button><button class="g" aria-label="Einstellungen"><svg><use href="#gear"/></svg></button></div></td></tr>
          <tr><td><div class="id l2"><svg class="sf"><use href="#state"/></svg>operational</div></td><td><div class="nm no">Drucker betriebsbereit</div></td><td><div class="ty"><svg><use href="#st"/></svg>state</div></td><td class="ro">state</td><td class="va">true</td><td><div class="ac"><button aria-label="Löschen"><svg><use href="#trash"/></svg></button><button class="g" aria-label="Einstellungen"><svg><use href="#gear"/></svg></button></div></td></tr>
          <tr><td><div class="id l2"><svg class="sf"><use href="#state"/></svg>printer_status</div></td><td><div class="nm no">Printer Status</div></td><td><div class="ty"><svg><use href="#st"/></svg>state</div></td><td class="ro">state</td><td class="va">API not connected</td><td><div class="ac"><button aria-label="Löschen"><svg><use href="#trash"/></svg></button><button class="g" aria-label="Einstellungen"><svg><use href="#gear"/></svg></button></div></td></tr>
          <tr><td><div class="id l2"><svg class="sf"><use href="#state"/></svg>printing</div></td><td><div class="nm no">Druckt</div></td><td><div class="ty"><svg><use href="#st"/></svg>state</div></td><td class="ro">state</td><td class="va">false</td><td><div class="ac"><button aria-label="Löschen"><svg><use href="#trash"/></svg></button><button class="g" aria-label="Einstellungen"><svg><use href="#gear"/></svg></button></div></td></tr>
          <tr><td><div class="id l0"><svg class="fc"><use href="#folder"/></svg>paw</div></td><td><div class="nm"><svg><use href="#paw"/></svg>paw</div></td><td><div class="ty"><svg><use href="#doc"/></svg>meta</div></td><td></td><td></td><td><div class="ac"><button aria-label="Löschen"><svg><use href="#trash"/></svg></button></div></td></tr>
          <tr><td><div class="id l0"><svg class="fc"><use href="#folder"/></svg>rpi2</div></td><td><div class="nm"><svg><use href="#rpi"/></svg>rpi2</div></td><td><div class="ty"><svg><use href="#doc"/></svg>meta</div></td><td></td><td></td><td><div class="ac"><button aria-label="Löschen"><svg><use href="#trash"/></svg></button></div></td></tr>
          <tr><td><div class="id l0"><svg class="fc"><use href="#folder"/></svg>script</div></td><td></td><td></td><td></td><td></td><td><div class="ac up"><button aria-label="Löschen"><svg><use href="#trash"/></svg></button></div></td></tr>
          <tr><td></td><td><div class="nm"><svg viewBox="0 0 28 28"><path d="M3 2l10-2 2 4v20H5z" fill="#222"/></svg></div></td><td></td><td></td><td></td><td></td></tr>
          </tbody>
        </table>
        </div>
        <div class="track"><i class="before"></i><i class="thumb"></i><i class="after"></i></div>
      </div>
    </section>
  </main>
</div>

<footer class="taskbar">
  <button class="start"><svg class="i16" viewBox="0 0 16 16"><path d="M1 3q3-2 6 0L6 8Q3 6 0 8z" fill="#e8542a"/><path d="M8 3q3 2 7 0l-1 5q-4 2-7 0z" fill="#7db53a"/><path d="M0 9q3-2 6 0l-1 5q-3-2-5 0z" fill="#3c86d8"/><path d="M7 9q3 2 7 0l-1 5q-4 2-7 0z" fill="#f4c52e"/></svg>Start</button>
  <i class="grip"></i>
  <button class="task pressed" aria-label="Waterfox"><svg class="i16"><use href="#wf"/></svg></button>
  <button class="task" aria-label="Explorer"><svg class="i16" viewBox="0 0 16 16"><path d="M1 2h5l1 1h7v11H1z" fill="#f3dc83" stroke="#b8962f"/><path d="M3 5h10v9H3z" fill="#fdf3c0"/><path d="M4 8h8v7h-2v-4H6v4H4z" fill="#62b5e6"/></svg></button>
  <button class="task" aria-label="Haus"><svg class="i18"><use href="#house"/></svg></button>
  <i class="grip push"></i>
  <span class="lang">DE</span>
  <i class="grip"></i>
  <div class="systray">
    <svg class="i18" viewBox="0 0 18 18"><path d="M3 1v16M3 2h6l1 1h5v7h-5L9 9H3" fill="#fff" stroke="#777" stroke-width="1.300"/><circle cx="12.500" cy="12.500" r="5" fill="#d52b2b"/><path d="M10.500 10.500l4 4M14.500 10.500l-4 4" stroke="#fff" stroke-width="1.600"/></svg>
    <svg class="i18" viewBox="0 0 18 18"><path d="M0 0h18v18H0z" fill="#f5f5f5"/><path d="M1 1h7v2H7l3 8 3-8h-1V1h6v2h-1l-6 13H8L3 3H1z"/><path d="M1 8l3 2-3 2M1 14l4 2" stroke="#b33" fill="none"/><path d="M12 12h6v5h-6z" fill="#1b6b3a"/></svg>
    <svg class="i18"><use href="#house"/></svg>
    <svg class="i18" viewBox="0 0 18 18"><g fill="#eee" stroke="#666"><path d="M5.500 4.500h12v9h-12zM9 14v2h5v-2M1.500 2.500h4v5h-4zM2.500 0v2M4.500 0v2M3.500 8v9h6"/></g><path d="M8 7h7v4H8z" fill="#888"/></svg>
    <svg class="i18" viewBox="0 0 18 18"><path d="M1 6h4l5-5v16l-5-5H1z" fill="#fff" stroke="#777"/><path d="M12 5q3 4 0 8M14.500 3q4 6 0 12" fill="none" stroke="#888" stroke-width="1.300"/></svg>
    <time>17:33</time>
    <svg class="i16" viewBox="0 0 16 16"><path d="M0 2h16v11H0z" fill="#2b6cc4"/><path d="M0 2h16L0 11z" fill="#5b97e0"/><path d="M2 12l5 3H0z" fill="#2fa0a5"/></svg>
  </div>
</footer>
</body>
</html>
```
FILE: styles.css
```css
* { box-sizing: border-box; }
body {
  margin: 0;
  height: 100vh;
  display: flex;
  flex-direction: column;
  overflow: hidden;
  background: #fff;
  color: #15141a;
  font: 10px/16px "Noto Sans", sans-serif;
}
svg { display: block; flex: none; fill: currentColor; }
button { border: 0; padding: 0; background: none; font: inherit; color: inherit; display: flex; align-items: center; justify-content: center; }
a { color: inherit; text-decoration: none; }
.sprite { position: absolute; width: 0; height: 0; }
.i16 { width: 16px; height: 16px; }
.i18 { width: 18px; height: 18px; }
.i20 { width: 20px; height: 20px; }
.i24 { width: 24px; height: 24px; }
.ln { fill: none; stroke: #5b5b66; stroke-width: 1.3; }
.grey { color: #5b5b66; }

/* browser window */
.titlebar { flex: none; height: 18px; display: flex; align-items: center; gap: 2px; padding: 0 2px; background: linear-gradient(90deg, #0a246a, #a6caf0); color: #fff; }
.titlebar h1 { margin: 0; flex: 1; font: bold 12px/16px "Noto Sans", sans-serif; }
.winbtns { display: flex; }
.winbtns button { width: 16px; height: 14px; background: #d4d0c8; border: 1px solid; border-color: #fff #404040 #404040 #fff; }
.winbtns .x { margin-left: 2px; }
.winbtns svg { width: 10px; height: 10px; }
.menubar { flex: none; height: 25px; display: flex; align-items: center; gap: 13px; padding: 0 4px; background: #f0f0f4; border-top: 1px solid #d4d9dc; }
.menubar button { gap: 6px; }
.navbar { flex: none; height: 34px; display: flex; align-items: center; padding: 0 5px; background: #f9f9fb; }
.navbar button { position: relative; width: 34px; height: 30px; }
.navbar .off { opacity: .45; }
.urlbar { flex: 1; height: 26px; padding: 0 5px; margin: 0 5px 0 6px; display: flex; align-items: center; background: #f0f0f4; gap: 10px; }
.urlbar .i16:last-child { margin-left: -4px; }
.sec { font-size: 12px; padding-right: 8px; border-right: 1px solid #c3c3c9; margin-right: -3px; }
.url { flex: 1; border: 0; outline: 0; padding: 0; font: 12px/18px "Noto Sans", sans-serif; color: transparent; background: linear-gradient(90deg, #7a7a82 36px, #15141a 36px, #15141a 121px, #7a7a82 121px); background-clip: text; -webkit-background-clip: text; }
.navright { display: flex; align-items: center; }
.badge { position: absolute; right: 2px; top: 1px; padding: 0 3px; background: #5b5b66; color: #fff; font: bold 10px/12px "Noto Sans", sans-serif; }
.rule { width: 1px; height: 28px; margin: 0 2px 0 4px; background: #5b5b66; }
.navright button { width: 34px; }
.bookmarks { flex: none; height: 28px; padding: 2px 8px 0 7px; display: flex; align-items: center; justify-content: space-between; background: #f9f9fb; white-space: nowrap; }
.bookmarks a { display: flex; align-items: center; gap: 4px; }
.bookmarks .first { margin-left: 6px; }
.bookmarks .more { margin-left: 8px; }
.fav { width: 16px; height: 16px; overflow: hidden; text-align: center; }
.dsm { background: #0c7ad8; color: #fff; font-size: 7px; }
.imdb { background: #f0c419; color: #111; font-size: 6px; }
.tabs { flex: none; height: 31px; display: flex; background: #f0f0f4; border-bottom: 1px solid #c6c9cf; padding-left: 2px; }
.tab { width: 225px; padding: 0 14px 0 7px; display: flex; align-items: center; gap: 6px; border-left: 1px solid #9a9aa3; }
.tab span { flex: 1; white-space: nowrap; }
.tab svg { width: 16px; height: 16px; }
.tab button svg { width: 12px; height: 12px; }
.tab .fade { mask-image: linear-gradient(90deg, #000 80%, transparent); }
.tab.active { width: 221px; padding-right: 10px; border-left: 0; background: #f9f9fb; border-top: 2px solid #2f7fa8; }
.newtab { width: 36px; }

/* application */
.app { flex: 1; min-height: 0; display: flex; color: #212121; }
.side { flex: none; width: 180px; display: flex; flex-direction: column; border-right: 1px solid #dcdcdc; background: #fff; font: 16px/24px "Liberation Sans", sans-serif; }
.brand { height: 64px; display: flex; align-items: center; padding: 0 20px 0 8px; color: #9a9a9a; font-size: 11px; gap: 5px; }
.brand button { margin-left: auto; color: #555; }
.logo { width: 50px; height: 50px; }
.side a { height: 48px; display: flex; align-items: center; gap: 8px; padding-left: 16px; }
.side a span { padding-top: 2px; }
.side a svg { color: #757575; }
.side .ext { gap: 8px; }
.side .on { background: #3399cc; color: #fff; }
.side .on svg { color: #fff; }
.edit { margin: auto 12px 12px auto; color: #757575; }
.main { flex: 1; min-width: 0; display: flex; flex-direction: column; background: #fdfdfd; }
.appbar { flex: none; height: 64px; display: flex; align-items: center; gap: 24px; padding-left: 36px; background: #3399cc; color: #154053; box-shadow: 0 2px 6px rgba(0, 0, 0, .4); }
.panel { flex: 1; min-height: 0; margin: 8px; display: flex; flex-direction: column; overflow: hidden; background: #fff; border-radius: 4px; box-shadow: 0 1px 3px rgba(0, 0, 0, .35); font-family: "Open Sans", sans-serif; }
.tools { flex: none; height: 48px; display: flex; align-items: center; padding: 0 8px 0 0; color: #6b6b6b; }
.tools button { width: 48px; height: 48px; }
.folders { display: flex; justify-content: center; width: 132px; padding-right: 4px; }
.tools .folders button { width: 44px; flex: none; }
.tools .blue { color: #3399cc; }
.tools .off { opacity: .5; }
.tools > button:last-child { width: 32px; }
.f16 { width: 16px; height: 12px; }
.f18 { width: 18px; height: 12px; }
.stats { margin-left: auto; padding-right: 8px; color: #111; font-size: 11px; }
.filters { flex: none; height: 38px; display: flex; overflow: hidden; padding: 2px 0 0 8px; font: 16px/24px "Liberation Sans", sans-serif; }
.f { flex: none; height: 30px; padding-right: 1px; margin-right: 4px; }
.f.id { flex: 546 1 0; }
.f.name { flex: 396 1 0; }
.f.typ { width: 76px; }
.f.rolle { width: 116px; }
.f.raum { width: 176px; }
.f.wert { width: 136px; line-height: 28px; font-family: "Open Sans", sans-serif; font-size: 15px; }
.f.einst { width: 66px; margin-right: 0; padding: 0; overflow: hidden; }
.f:not(.wert):not(.einst) { background: repeating-linear-gradient(#888 0 2px, transparent 2px 4px) right top / 1px 27px no-repeat; }
.f input, .f select { appearance: none; width: 100%; height: 30px; padding: 2px 0 0; border: 0; border-bottom: 1px solid #8a8a8a; border-radius: 0; outline: 0; background: none; font: inherit; color: #9a9a9a; }
.f input { height: 33px; padding: 0; }
.f input::placeholder { color: #a2a2a2; opacity: 1; }
.f.id, .f.name { height: 33px; }
.f select { background: linear-gradient(to bottom right, #666 50%, transparent 51%) right 7px top 12px / 5px 5px no-repeat, linear-gradient(to bottom left, #666 50%, transparent 51%) right 12px top 12px / 5px 5px no-repeat; }
.f.einst select { width: 130px; }
.scroll { flex: 1; min-height: 0; display: flex; padding-right: 8px; }
.view { flex: 1; min-width: 0; overflow: hidden; }
.objects { width: 100%; border-collapse: collapse; table-layout: fixed; }
.objects td { height: 32px; padding: 0; vertical-align: middle; white-space: nowrap; line-height: 20px; }
.cname { width: 415px; }
.ctype { width: 78px; }
.crole { width: 459px; }
.cval { width: 158px; }
.cact { width: 91px; }
.id, .nm, .ty, .ac { display: flex; align-items: center; }
div.id { font-size: 15px; padding-top: 2px; }
.objects .id svg { color: #164477; margin-bottom: 2px; }
.objects .fc { width: 22px; height: 17px; margin-right: 14px; }
.objects .fo { width: 25px; height: 17px; margin-right: 11px; }
.objects .id .sf { width: 15px; height: 20px; margin: 0 13px 2px 6px; color: #1c1c1c; }
.l0 { padding-left: 8px; }
.l1 { padding-left: 24px; }
.l2 { padding-left: 40px; }
.l3 { padding-left: 56px; }
.l4 { padding-left: 72px; }
.l5 { padding-left: 88px; }
.nm { font-size: 13px; gap: 5px; padding-top: 2px; }
.nm svg { width: 28px; height: 28px; }
.nm.no { padding-left: 35px; }
.ty { font-size: 11px; gap: 5px; padding: 2px 0 0 2px; }
.ty svg { width: 22px; height: 22px; color: #1c1c1c; }
.ty.fold { gap: 7px; }
.ty.fold svg { height: 15px; }
.objects .ro { font-size: 11px; padding-top: 2px; }
.objects .va { font-size: 15px; padding-top: 2px; }
.va small { font-size: 14px; color: #444; }
.ac { padding-top: 3px; color: rgba(0, 0, 0, .38); }
.ac.up { padding-top: 0; }
.ac svg { width: 24px; height: 24px; }
.ac .g { color: rgba(0, 0, 0, .1); }
.sel { background: #3399cc; color: #fff; }
.objects .sel .id svg, .sel .ty svg { color: #fff; }
.track { width: 8px; display: flex; flex-direction: column; background: #c8c8c8; }
.before { flex: 475; }
.thumb { flex: 193; background: #555; }
.after { flex: 201; }

/* desktop task bar */
.taskbar { flex: none; height: 28px; display: flex; align-items: center; gap: 6px; padding: 0 2px; background: #d4d0c8; border-top: 1px solid #9c9a94; box-shadow: inset 0 1px #fff; color: #000; }
.start { width: 52px; height: 22px; gap: 1px; border: 1px solid; border-color: #fff #404040 #404040 #fff; font-weight: bold; font-size: 11px; }
.grip { width: 3px; height: 18px; border-left: 1px solid #fff; border-right: 1px solid #808080; }
.task { width: 26px; height: 22px; }
.task.pressed { width: 32px; background: #f6f5f2; border: 1px solid; border-color: #404040 #fff #fff #404040; }
.push { margin-left: auto; }
.lang { font-size: 12px; }
.systray { height: 22px; margin-left: -4px; display: flex; align-items: center; gap: 6px; padding: 0 2px 0 6px; border: 1px solid; border-color: #808080 #fff #fff #808080; }
.systray time { margin: 0 2px 0 5px; font-size: 11px; }
```
